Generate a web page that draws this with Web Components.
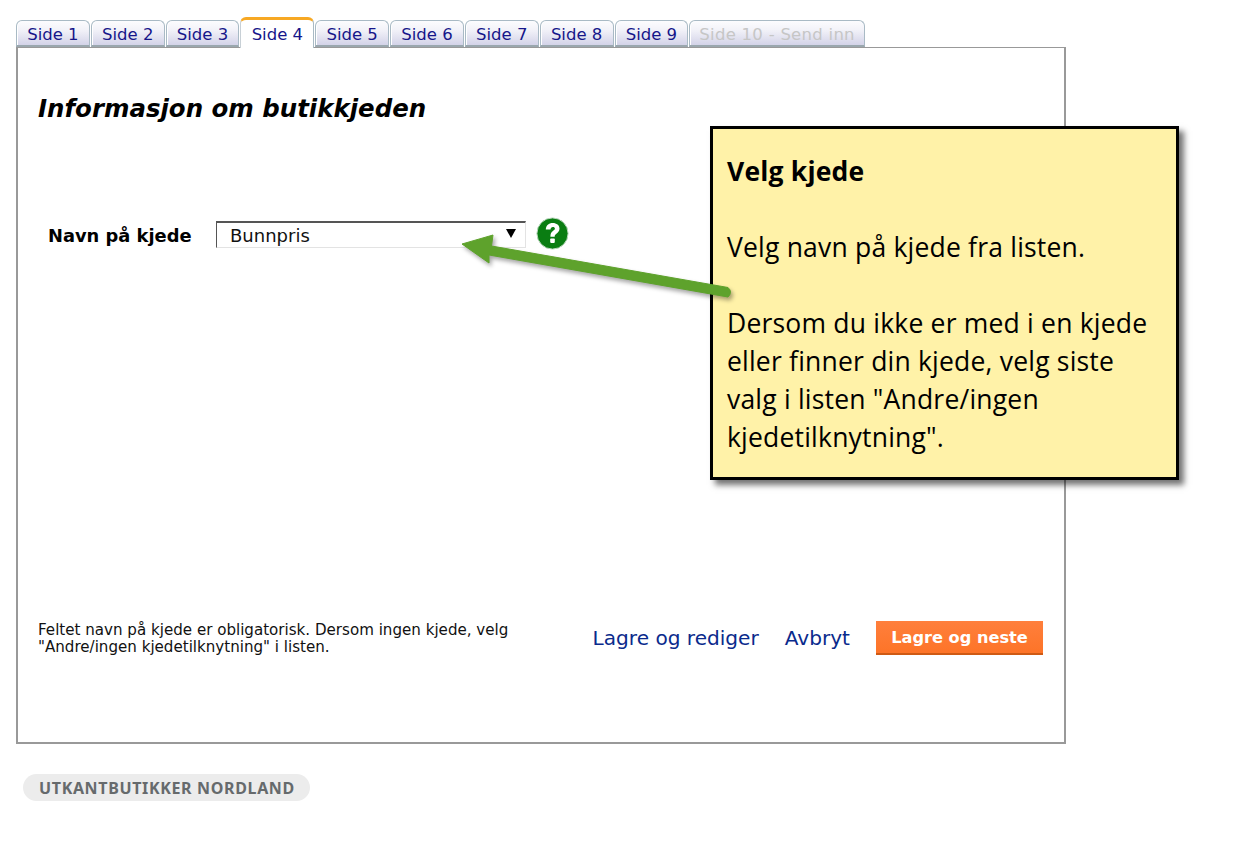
<!DOCTYPE html>
<html lang="no"><head><meta charset="utf-8"><title>Informasjon om butikkjeden</title>
<style>html,body{margin:0;background:#fff}body{font-family:"DejaVu Sans",Verdana,sans-serif;position:relative;height:867px;overflow:hidden}</style></head>
<body>
<survey-page></survey-page>
<help-callout></help-callout>
<script>
function def(name, html, setup){
  customElements.define(name, class extends HTMLElement{
    constructor(){super();this.attachShadow({mode:'open'}).innerHTML=html;}
    connectedCallback(){ if(setup) setup(this); }
  });
}
def('wizard-tab',`<style>
:host{display:block;box-sizing:border-box;height:27px;padding:4px 10.2px 0 10.2px;margin-right:1px;border:1px solid #a9bac5;border-bottom:2px solid #9aa7ae;border-radius:6px 6px 0 0;background:linear-gradient(#fcfcfe 0,#f3f3f9 35%,#d3d3e8 100%);box-shadow:inset 1px 0 0 #fff;font-size:16.5px;line-height:20px;color:#16168a;white-space:nowrap}
:host([active]){height:31px;margin-bottom:-1px;border:0;border-top:3px solid #f7a823;border-left:1px solid #c8d0d6;border-right:1px solid #a9bac5;background:#fff;padding-top:5px;box-shadow:none}
:host([disabled]){color:#c6c6c6;letter-spacing:.27px;padding-left:9px;padding-right:9px}
</style><slot></slot>`);
def('wizard-tabs',`<style>:host{display:flex;align-items:flex-end;height:30px;padding:17px 0 0 16px;position:relative;z-index:1}</style><slot></slot>`);
def('chain-select',`<style>
:host{display:flex;align-items:center;justify-content:space-between;box-sizing:border-box;width:310px;height:27px;padding:0 9px 0 13px;border:1px solid #e3e3e3;border-top:2px solid #555;border-left:1px solid #555;font-size:18px;color:#111}
svg{display:block;margin-top:-4px}
</style><slot></slot><svg width="10" height="9" viewBox="0 0 10 9"><path d="M0 0H10L5 9Z" fill="#000"/></svg>`);
def('help-icon',`<style>:host{display:block;width:33px;height:33px;margin:-4px 0 0 10px}svg{display:block}</style>
<svg width="33" height="33" viewBox="0 0 33 33"><circle cx="16.5" cy="16.5" r="15.6" fill="#0a7d12" stroke="#bcd8bf" stroke-width="1"/><path d="M9.8 12.600c.2-4.300 3-6.600 6.900-6.600 3.900 0 6.800 2.200 6.800 5.600 0 2.600-1.400 3.900-3.100 5.100-1.300.9-1.700 1.500-1.700 3h-4.300c0-3 .7-4.300 2.500-5.600 1.300-.9 2-1.500 2-2.500 0-1-.8-1.700-2-1.700-1.400 0-2.300.9-2.400 2.700z" fill="#fff"/><rect x="14.200" y="21.500" width="4.600" height="4.400" rx=".8" fill="#fff"/></svg>`);
def('link-action',`<style>:host{display:block;font-size:20.1px;color:#0a2a8c;white-space:nowrap}</style><slot></slot>`);
def('primary-button',`<style>:host{display:flex;align-items:center;justify-content:center;box-sizing:border-box;width:167px;height:34px;padding-top:1px;background:linear-gradient(#ff7f3c,#fd7428);border-bottom:2px solid #cf5a14;color:#fff;font-weight:bold;font-size:16.2px;white-space:nowrap}</style><slot></slot>`);
def('site-pill',`<style>:host{display:inline-block;box-sizing:border-box;height:27px;margin:30px 0 0 23px;padding:0 15px 0 16px;border-radius:14px;background:#ececec;color:#666a6c;font:bold 16px/28px "Noto Sans",sans-serif;letter-spacing:.65px;white-space:nowrap}</style><slot></slot>`);
def('wizard-panel',`<style>
:host{display:flex;flex-direction:column;box-sizing:border-box;width:1050px;height:697px;margin-left:16px;padding:0 21px 0 20px;border:2px solid #999;border-top-width:1px;background:#fff}
h2{margin:46px 0 0;font-size:24.45px;line-height:30px;font-style:italic;font-weight:bold;color:#000}
.row{display:flex;align-items:flex-start;margin-top:97px;height:33px}
.label{width:178px;padding:4px 0 0 10px;box-sizing:border-box;font-size:17.85px;font-weight:bold;line-height:22px}
.foot{display:flex;margin-top:auto;margin-bottom:86px;align-items:flex-start}
.note{flex:1;font-size:15.1px;line-height:17px;color:#111;padding-top:1px}
.acts{display:flex;align-items:center;gap:26px}
</style>
<h2>Informasjon om butikkjeden</h2>
<div class="row"><span class="label">Navn på kjede</span><chain-select>Bunnpris</chain-select><help-icon></help-icon></div>
<div class="foot"><div class="note">Feltet navn på kjede er obligatorisk. Dersom ingen kjede, velg<br>"Andre/ingen kjedetilknytning" i listen.</div>
<div class="acts"><link-action>Lagre og rediger</link-action><link-action>Avbryt</link-action><primary-button>Lagre og neste</primary-button></div></div>`);
def('survey-page',`<style>:host{display:block}</style>
<wizard-tabs><wizard-tab>Side 1</wizard-tab><wizard-tab>Side 2</wizard-tab><wizard-tab>Side 3</wizard-tab><wizard-tab active>Side 4</wizard-tab><wizard-tab>Side 5</wizard-tab><wizard-tab>Side 6</wizard-tab><wizard-tab>Side 7</wizard-tab><wizard-tab>Side 8</wizard-tab><wizard-tab>Side 9</wizard-tab><wizard-tab disabled>Side 10 - Send inn</wizard-tab></wizard-tabs>
<wizard-panel></wizard-panel><site-pill>UTKANTBUTIKKER NORDLAND</site-pill>`);
def('help-callout',`<style>
:host{display:block;position:absolute;left:710px;top:126px;width:469px;height:354px;box-sizing:border-box;padding:23px 14px 0 14px;border:3px solid #000;background:#fff2a8;box-shadow:5px 5px 6px rgba(0,0,0,.55);font:26.5px/38px "Open Sans",sans-serif;letter-spacing:.2px;color:#000;z-index:2}
p{margin:0 0 38px}b{font-weight:bold}
svg{position:absolute;left:-254px;top:98px;overflow:visible;filter:drop-shadow(2px 3px 2px rgba(0,0,0,.35))}
</style>
<svg width="275" height="72" viewBox="459 227 275 72"><path d="M462 244 L493 235 L491.500 246 L728 287.500 Q733 292 728 297 L489 255 L489 263 Z" fill="#5ea22c" stroke="#5ea22c" stroke-width="1" stroke-linejoin="round"/></svg>
<p><b>Velg kjede</b></p><p>Velg navn på kjede fra listen.</p><p>Dersom du ikke er med i en kjede<br>eller finner din kjede, velg siste<br>valg i listen "Andre/ingen<br>kjedetilknytning".</p>`);
</script>
</body></html>
